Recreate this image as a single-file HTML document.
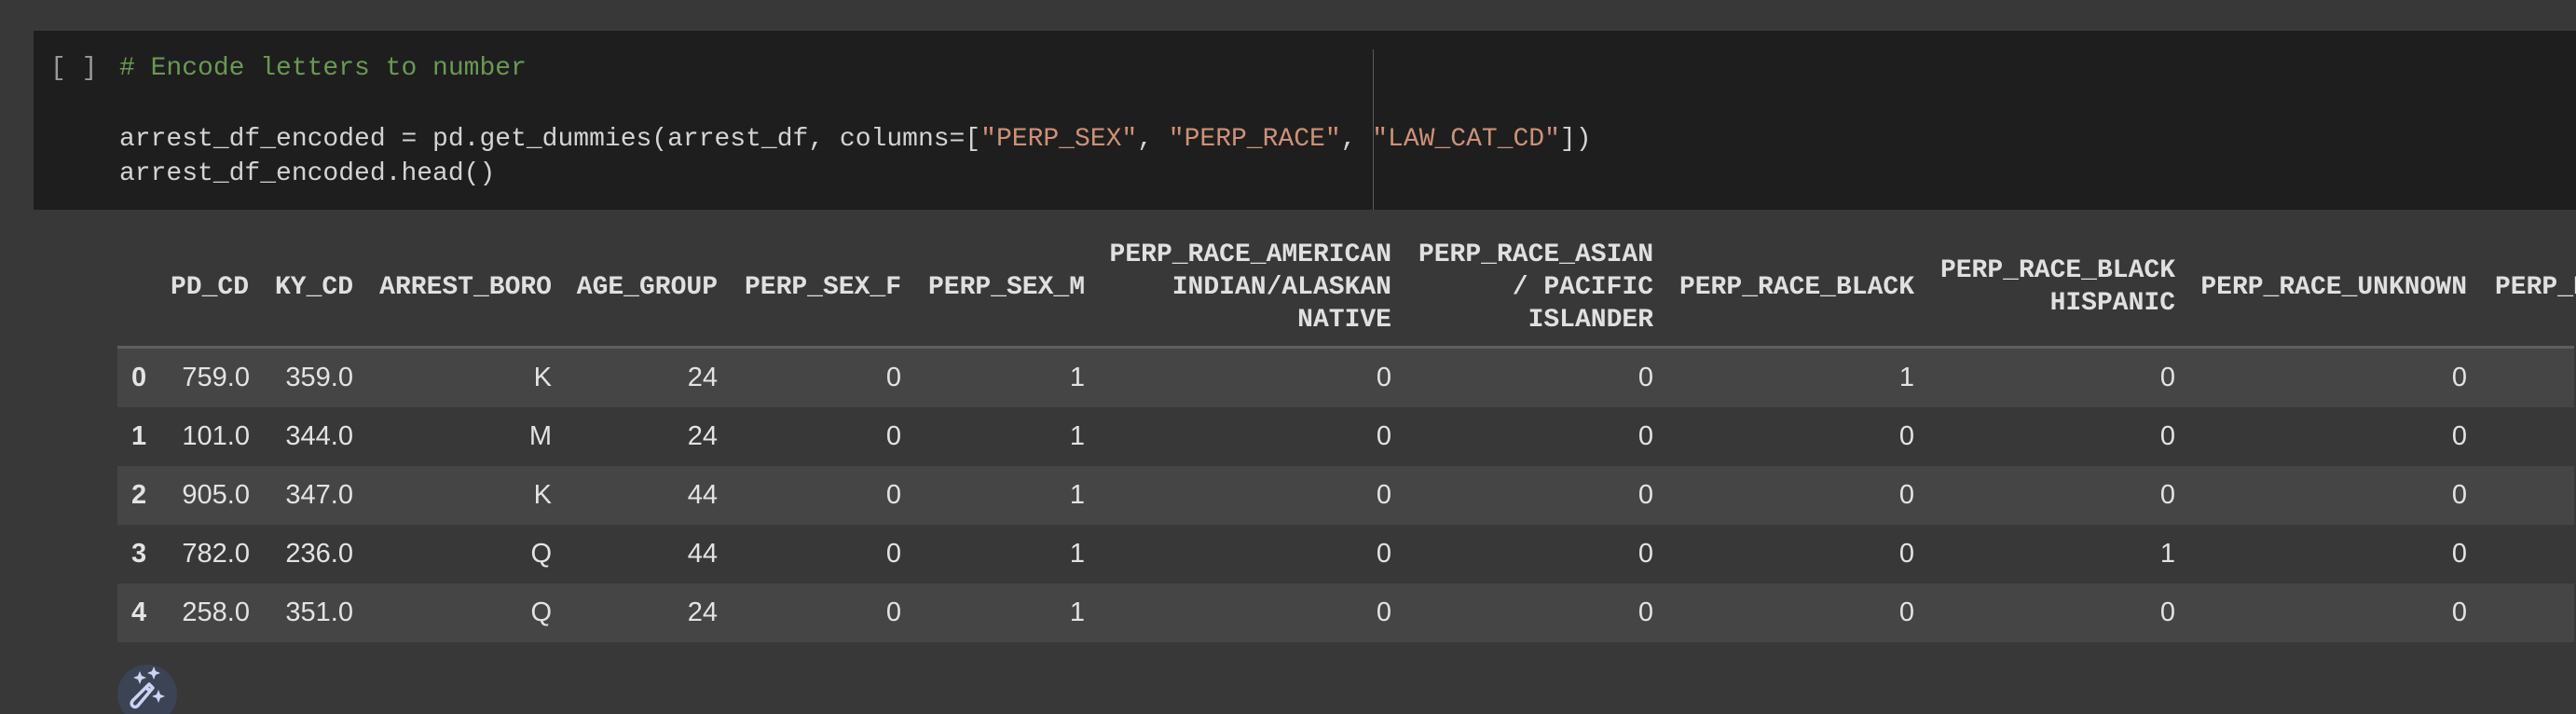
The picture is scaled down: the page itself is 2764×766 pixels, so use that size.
<!DOCTYPE html>
<html><head><meta charset="utf-8"><style>
*{margin:0;padding:0;box-sizing:border-box}
body{width:2764px;height:766px;overflow:hidden;background:#383838;position:relative;font-family:"Liberation Sans",sans-serif}
#wrap{position:absolute;left:0;top:0;width:2764px;height:766px;overflow:hidden}
.cell{position:absolute;left:36px;top:33px;width:2728px;height:192px;background:#1e1e1e}
.code{position:absolute;font-family:"Liberation Mono",monospace;font-size:28px;line-height:37px;color:#d4d4d4;white-space:pre}
.c{color:#6a9955}.s{color:#ce9178}
.div{position:absolute;left:1473px;top:53px;width:1px;height:172px;background:#5a5a5a}
.h{position:absolute;font-family:"Liberation Mono",monospace;font-weight:bold;font-size:28px;line-height:35px;color:#e0e0e0;text-align:right;white-space:pre}
.row{position:absolute;left:126px;width:2636px;height:63px}
.d{position:absolute;font-size:29px;color:#e3e3e3;text-align:right;white-space:pre;line-height:63px}
.i{position:absolute;left:141px;font-size:29px;font-weight:bold;color:#e3e3e3;line-height:63px}
.hr{position:absolute;left:126px;top:371px;width:2636px;height:3px;background:#5e5e5e}
</style></head><body><div id="wrap">
<div class="cell"></div>
<div class="code" style="left:54px;top:55px;color:#9a9a9a">[ ]</div>
<div class="code" style="left:128px;top:55px"><span class="c"># Encode letters to number</span></div>
<div class="code" style="left:128px;top:131px">arrest_df_encoded = pd.get_dummies(arrest_df, columns=[<span class="s">"PERP_SEX"</span>, <span class="s">"PERP_RACE"</span>, <span class="s">"LAW_CAT_CD"</span>])
arrest_df_encoded.head()</div>
<div class="div"></div>

<div class="h" style="right:2497px;top:291px">PD_CD</div>
<div class="h" style="right:2385px;top:291px">KY_CD</div>
<div class="h" style="right:2172px;top:291px">ARREST_BORO</div>
<div class="h" style="right:1994px;top:291px">AGE_GROUP</div>
<div class="h" style="right:1797px;top:291px">PERP_SEX_F</div>
<div class="h" style="right:1600px;top:291px">PERP_SEX_M</div>
<div class="h" style="right:1271px;top:256px">PERP_RACE_AMERICAN
INDIAN/ALASKAN
NATIVE</div>
<div class="h" style="right:990px;top:256px">PERP_RACE_ASIAN
/ PACIFIC
ISLANDER</div>
<div class="h" style="right:710px;top:291px">PERP_RACE_BLACK</div>
<div class="h" style="right:430px;top:273px">PERP_RACE_BLACK
HISPANIC</div>
<div class="h" style="right:117px;top:291px">PERP_RACE_UNKNOWN</div>
<div class="h" style="left:2677px;top:291px;width:87px;overflow:hidden;text-align:left">PERP_RACE_WHITE</div>
<div class="hr"></div>

<div class="row" style="top:374px;background:#454545"></div>
<div class="row" style="top:437px;background:#383838"></div>
<div class="row" style="top:500px;background:#454545"></div>
<div class="row" style="top:563px;background:#383838"></div>
<div class="row" style="top:626px;background:#454545"></div>

<div id="data"></div>

<svg style="position:absolute;left:126px;top:713px" width="64" height="53" viewBox="0 0 64 53">
<circle cx="32" cy="32" r="32" fill="#3b4355"/>
<g fill="#c9d5f2">
<path d="M24 7 l2 5 5 2 -5 2 -2 5 -2 -5 -5 -2 5 -2z"/>
<path d="M39 2 l2 5 5 2 -5 2 -2 5 -2 -5 -5 -2 5 -2z"/>
<path d="M44 27 l2 5 5 2 -5 2 -2 5 -2 -5 -5 -2 5 -2z"/>
</g>
<path d="M34 21 L38 25 L22 44 Q19 47 16 44 Q14 41 17 38 Z" fill="none" stroke="#c9d5f2" stroke-width="3.5" stroke-linejoin="round"/>
<path d="M31 25 L35 28" stroke="#c9d5f2" stroke-width="4"/>
</svg>
</div>
<script>
const R=[268,379,592,770,967,1164,1493,1774,2054,2334,2647];
const rows=[
["759.0","359.0","K","24","0","1","0","0","1","0","0"],
["101.0","344.0","M","24","0","1","0","0","0","0","0"],
["905.0","347.0","K","44","0","1","0","0","0","0","0"],
["782.0","236.0","Q","44","0","1","0","0","0","1","0"],
["258.0","351.0","Q","24","0","1","0","0","0","0","0"]];
let h="";
rows.forEach((r,k)=>{const t=374+k*63;
h+=`<div class="i" style="top:${t}px">${k}</div>`;
r.forEach((v,j)=>{h+=`<div class="d" style="top:${t}px;right:${2764-R[j]}px">${v}</div>`});});
document.getElementById("data").innerHTML=h;
</script>
</body></html>
